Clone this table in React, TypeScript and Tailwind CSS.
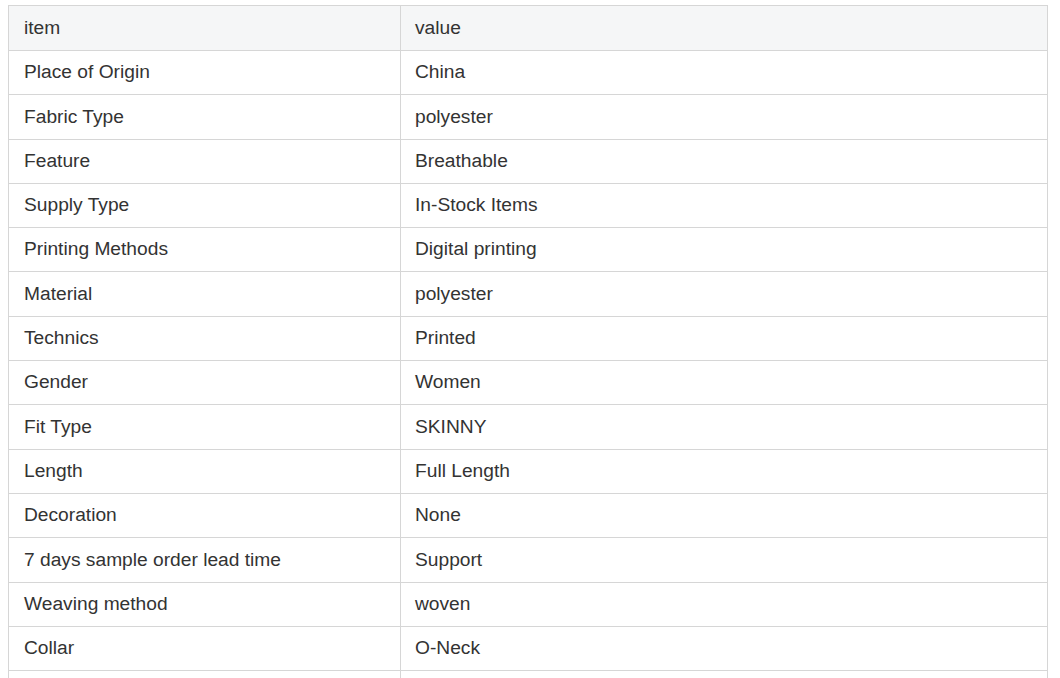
const rows: [string, string][] = [
  ["Place of Origin", "China"],
  ["Fabric Type", "polyester"],
  ["Feature", "Breathable"],
  ["Supply Type", "In-Stock Items"],
  ["Printing Methods", "Digital printing"],
  ["Material", "polyester"],
  ["Technics", "Printed"],
  ["Gender", "Women"],
  ["Fit Type", "SKINNY"],
  ["Length", "Full Length"],
  ["Decoration", "None"],
  ["7 days sample order lead time", "Support"],
  ["Weaving method", "woven"],
  ["Collar", "O-Neck"],
  ["", ""],
];

export default function App() {
  return (
    <div className="h-[678px] overflow-hidden bg-white pt-[5px] pl-[8px] font-['Liberation_Sans',Arial,sans-serif] text-[19.2px] text-[#333]">
      <table className="w-[1040px] border-collapse table-fixed">
        <colgroup>
          <col className="w-[392px]" />
          <col />
        </colgroup>
        <thead>
          <tr className="h-[45px] bg-[#f5f6f7]">
            <th className="border border-[#d6d6d6] px-[15px] text-left font-normal">item</th>
            <th className="border border-[#d6d6d6] px-[14px] text-left font-normal">value</th>
          </tr>
        </thead>
        <tbody>
          {rows.map(([k, v], i) => (
            <tr key={i} className="h-[44.3px]">
              <td className="border border-[#d6d6d6] px-[15px]">{k}</td>
              <td className="border border-[#d6d6d6] px-[14px]">{v}</td>
            </tr>
          ))}
        </tbody>
      </table>
    </div>
  );
}
